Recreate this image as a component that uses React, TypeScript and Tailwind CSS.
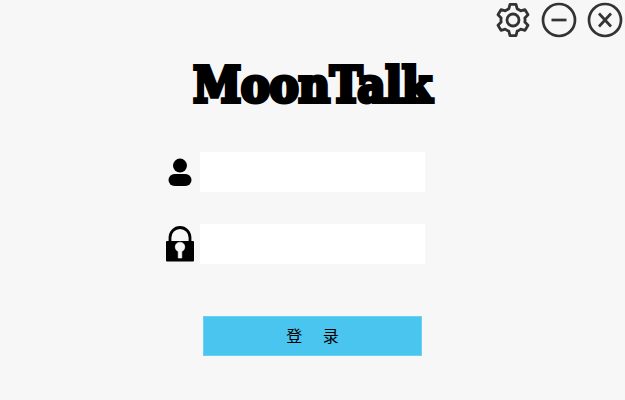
import { useState } from "react";
import type { FormEvent, ReactNode } from "react";

function GearIcon() {
  return (
    <svg viewBox="-18 -18 36 36" className="size-9" fill="none" stroke="#333" strokeWidth="2.8" strokeLinejoin="round" aria-hidden="true">
      <path d="M-4.2-11.2-3-15.6H3L4.2-11.2Q6-10.6 7.6-9.2L12-10.4 15-5.2 11.8-2Q12.3 0 11.8 2L15 5.2 12 10.4 7.6 9.2Q6 10.6 4.2 11.2L3 15.6H-3L-4.2 11.2Q-6 10.6-7.6 9.2L-12 10.4-15 5.2-11.8 2Q-12.3 0-11.8-2L-15-5.2-12-10.4-7.6-9.2Q-6-10.6-4.2-11.2Z" />
      <circle r="6" />
    </svg>
  );
}

function RoundIcon({ children }: { children: ReactNode }) {
  return (
    <svg viewBox="-18 -18 36 36" className="size-9" fill="none" stroke="#333" strokeWidth="2.7" aria-hidden="true">
      <circle r="16" />
      {children}
    </svg>
  );
}

function UserIcon() {
  return (
    <svg viewBox="0 0 28 28" className="size-7" aria-hidden="true">
      <circle cx="14" cy="7.6" r="7" />
      <rect x="2.5" y="16" width="23" height="12" rx="6" />
    </svg>
  );
}

function LockIcon() {
  return (
    <svg viewBox="0 0 28 36" className="h-9 w-7" aria-hidden="true">
      <path d="M4 17V11.5a10 10 0 0 1 20 0V17" fill="none" stroke="#000" strokeWidth="2.8" />
      <rect y="15" width="28" height="20.5" rx="1" />
      <path d="M12.2 32V25.4a4.8 4.8 0 1 1 3.6 0V32Z" fill="#f7f7f7" stroke="#f7f7f7" strokeWidth=".6" />
    </svg>
  );
}

interface FieldProps {
  id: string;
  label: string;
  type: string;
  icon: ReactNode;
}

function Field({ id, label, type, icon }: FieldProps) {
  const [value, setValue] = useState("");
  return (
    <div className="grid w-full grid-cols-[1fr_225px_1fr] items-center gap-x-1.5">
      <label htmlFor={id} aria-label={label} className="justify-self-end">
        {icon}
      </label>
      <input
        id={id}
        type={type}
        value={value}
        onChange={(e) => setValue(e.target.value)}
        className="h-10 w-full bg-white px-2 text-base outline-none"
      />
    </div>
  );
}

export default function App() {
  const submit = (e: FormEvent) => e.preventDefault();
  return (
    <div className="min-h-screen bg-[#f7f7f7] text-black">
      <header className="flex justify-end gap-2.5 pt-0.5 pr-0.5">
        <button type="button" aria-label="设置"><GearIcon /></button>
        <button type="button" aria-label="最小化"><RoundIcon><path d="M-7.5 0H7.5" /></RoundIcon></button>
        <button type="button" aria-label="关闭"><RoundIcon><path d="M-6-6.5 6 6.5M6-6.5-6 6.5" /></RoundIcon></button>
      </header>
      <main className="flex flex-col items-center pt-4">
        <h1 className="font-['DejaVu_Serif_Condensed','DejaVu_Serif',serif] text-[48px] leading-[62px] font-bold [-webkit-text-stroke:4px_black]">
          MoonTalk
        </h1>
        <form onSubmit={submit} className="flex w-full flex-col items-center gap-8 pt-9">
          <Field id="account" label="账号" type="text" icon={<UserIcon />} />
          <Field id="password" label="密码" type="password" icon={<LockIcon />} />
          <button
            type="submit"
            className="mt-5 h-10 w-[219px] border border-[#6dd0f3] bg-[#49c5ef] pt-0.5 font-['Liberation_Sans','Noto_Sans_CJK_SC',sans-serif] text-base whitespace-pre"
          >
            {"登　 录"}
          </button>
        </form>
      </main>
    </div>
  );
}
